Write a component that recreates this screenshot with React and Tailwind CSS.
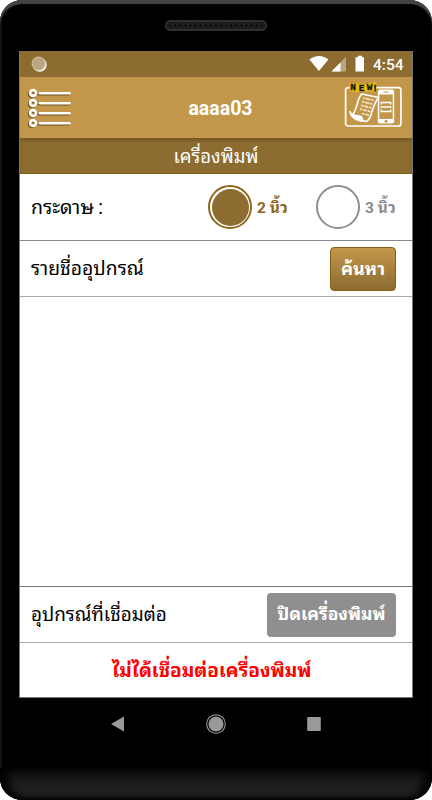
const MENU_LINES = [6, 16, 26, 36];
const SPEAKER_HOLES = Array.from({ length: 19 }, (_, i) => 4 + i * 5.1);

function Speaker() {
  return (
    <svg className="block" width="102" height="11" viewBox="0 0 102 11">
      <rect x="0.7" y="1" width="100.6" height="9" rx="4.5" fill="#191919" stroke="#3c3c3c" strokeWidth="1.3" />
      {SPEAKER_HOLES.map((x) => (
        <circle key={x} cx={x + 1} cy="5.6" r="1.8" fill="#050505" stroke="#363636" strokeWidth="0.7" />
      ))}
    </svg>
  );
}

function StatusBar() {
  return (
    <div className="flex h-[26px] items-center justify-between bg-[#8c6c31] pr-[9px] pl-[11px]">
      <svg width="17" height="17" viewBox="0 0 17 17">
        <circle cx="8.7" cy="8.7" r="7" fill="#fff" />
        <circle cx="7.6" cy="7.6" r="7" fill="#b9a582" />
        <circle cx="7.6" cy="7.6" r="6.3" fill="none" stroke="#d5c9b4" strokeWidth="1.4" strokeDasharray="0.9 1.1" />
      </svg>
      <div className="flex items-center">
        <svg width="56" height="18" viewBox="0 0 56 18" fill="#fff">
          <path d="M0.4 4.5C6 -0.3 14 -0.3 19.4 4.5L9.9 16z" />
          <path d="M37 1.8V16.5H22.5z" opacity="0.4" />
          <path d="M31.5 7.4V16.5H22.5z" />
          <path d="M49 0.7h4v1.6h2V16.5h-8.5V2.3H49z" />
        </svg>
        <span className="mt-[3px] ml-2 w-[30px] font-['Roboto',sans-serif] text-[15.5px] leading-none font-medium whitespace-nowrap text-white">4:54</span>
      </div>
    </div>
  );
}

function MenuIcon() {
  return (
    <svg className="drop-shadow-[-1px_1px_0.5px_#71531f]" width="46" height="42" viewBox="0 0 46 42" fill="none" stroke="#fff">
      {MENU_LINES.map((y) => (
        <g key={y}>
          <circle cx="6" cy={y} r="2.9" strokeWidth="2.6" />
          <path d={`M13 ${y + 0.3}H42.5`} strokeWidth="2.6" strokeLinecap="round" />
        </g>
      ))}
    </svg>
  );
}

function ReceiptIcon() {
  return (
    <svg width="60" height="50" viewBox="0 0 60 50">
      <rect x="2.6" y="8.6" width="55.3" height="38.4" rx="2.5" fill="none" stroke="#fff" strokeWidth="1.7" />
      <path d="M19 15L35.5 18.500Q31.500 24 28.500 34Q26.500 42 22.500 42.500L9 37Q12 33 14 26Q16 17 19 15z" fill="#c3974a" stroke="#fff" strokeWidth="1.600" strokeLinejoin="round" />
      <path d="M6.500 32Q9 36.500 16 36.500Q20.500 37 19.500 42.500Q8 41.500 6.500 32z" fill="#fff" stroke="#fff" strokeLinejoin="round" />
      <path d="M20 19L31.500 21.500M19 22.700L30 25.200M18 26.400L29 29M17 30L28 32.700M19 34.500L26.500 36.300" stroke="#fff" strokeWidth="1.700" strokeDasharray="2.500 0.800 4 0.800" opacity="0.750" />
      <rect x="34.800" y="10.500" width="16.400" height="34" rx="2.500" fill="#fff" />
      <path d="M36.300 15.500h13.400v24.500H36.300z" fill="#c3974a" />
      <path d="M40.500 13h5" stroke="#c3974a" strokeWidth="1.100" />
      <circle cx="43" cy="42.200" r="1.500" fill="#c3974a" />
      <path d="M38.300 25.500v-2h9.400v2M38.300 30.500v2h9.400v-2M37.500 28h11" fill="none" stroke="#fff" strokeWidth="1.300" />
      <path d="M6.500 4l8 .5 8 .5 8-1.500 3 .5v8l-8 .5-10 .5-9-1z" fill="#e8bd08" />
      <g fontFamily="Liberation Mono, monospace" fontSize="9.500" fontWeight="bold" fill="#111" stroke="#111" strokeWidth="0.300">
        <text x="7.300 15.800 23.800 29.300" y="10.800 12 10.800 11.800">NEW!</text>
      </g>
    </svg>
  );
}

function PaperOption({ label, selected }) {
  return (
    <div className="flex items-center">
      <div className={`flex h-11 w-11 items-center justify-center rounded-full border-2 ${selected ? "border-[#8f6718]" : "border-[#8f8f8f]"}`}>
        {selected && <div className="h-[37px] w-[37px] rounded-full bg-[#8c6c31]" />}
      </div>
      <span className={`mt-1 ml-[5px] w-[31px] text-[15.5px] leading-none font-bold whitespace-nowrap ${selected ? "text-[#8c6420]" : "text-[#8b8b8b]"}`}>{label}</span>
    </div>
  );
}

function NavBar() {
  return (
    <div className="flex justify-center">
      <svg width="212" height="22" viewBox="0 0 212 22" fill="#999">
        <path d="M1 11L14 3.5V18.5z" />
        <circle cx="106" cy="11" r="9.3" fill="none" stroke="#999" strokeWidth="1.1" />
        <circle cx="106" cy="11" r="7.5" />
        <rect x="197.2" y="4" width="13.6" height="14" rx="0.7" />
      </svg>
    </div>
  );
}

export default function App() {
  return (
    <div className="h-[800px] w-[432px] bg-white font-['Roboto','Noto_Sans_Thai_Looped','Droid_Sans_Thai','Loma','Waree','Noto_Sans_Thai',sans-serif]">
      <div className="flex h-full flex-col overflow-hidden rounded-[22px] bg-black shadow-[inset_0_4px_1px_#444,inset_2px_0_1px_#111]">
        <div className="flex h-[51px] justify-center pt-5">
          <Speaker />
        </div>
        <div className="mx-[19px] flex h-[647px] flex-col border-x border-[#777] bg-white">
          <StatusBar />
          <header className="flex h-[61px] items-center justify-between bg-[#c3974a] pr-[9px] pl-[7px]">
            <MenuIcon />
            <h1 className="pt-[3px] pl-[25px] text-[19.5px] leading-none font-bold text-white">aaaa03</h1>
            <div className="-mt-2">
              <ReceiptIcon />
            </div>
          </header>
          <div className="flex h-9 items-center justify-center border-b border-[#805d1b] bg-[#8c6c31] pt-1 text-[18.5px] text-white shadow-[inset_0_3px_3px_#79592a]">
            เครื่องพิมพ์
          </div>
          <div className="flex h-[67px] items-center justify-between border-b border-[#888] pr-4 pl-[11px]">
            <span className="pt-0.5 text-[19.5px] text-black">กระดาษ :</span>
            <div className="flex gap-[28px]">
              <PaperOption label="2 นิ้ว" selected />
              <PaperOption label="3 นิ้ว" />
            </div>
          </div>
          <div className="flex h-14 items-center justify-between border-b border-[#aaa] pr-4 pl-[11px]">
            <span className="pt-0.5 text-[19.3px] text-black">รายชื่ออุปกรณ์</span>
            <button className="h-11 w-[66px] rounded-[4px] border border-[#875f14] bg-linear-to-b from-[#c3974a] to-[#8c6c31] text-[18px] font-bold whitespace-nowrap text-white">ค้นหา</button>
          </div>
          <div className="flex-1" />
          <div className="flex h-[57px] items-center justify-between border-y border-t-[#777] border-b-[#aaa] pr-4 pl-[11px]">
            <span className="pt-0.5 text-[18.9px] text-black">อุปกรณ์ที่เชื่อมต่อ</span>
            <button className="h-11 w-[129px] rounded-[4px] bg-[#8f8f8f] text-[17.4px] font-bold whitespace-nowrap text-white">ปิดเครื่องพิมพ์</button>
          </div>
          <div className="flex h-[55px] items-center justify-center border-b border-[#777] pt-0.5 pr-[8px] text-[19.1px] font-bold text-[#ff0000]">
            ไม่ได้เชื่อมต่อเครื่องพิมพ์
          </div>
        </div>
        <div className="h-[70px] pt-[15px]">
          <NavBar />
        </div>
        <div className="h-8 rounded-b-[22px] bg-linear-to-b from-[#101010] to-[#292929] shadow-[inset_0_-2px_1px_#050505,inset_8px_0_10px_#000,inset_-8px_0_10px_#000]" />
      </div>
    </div>
  );
}
